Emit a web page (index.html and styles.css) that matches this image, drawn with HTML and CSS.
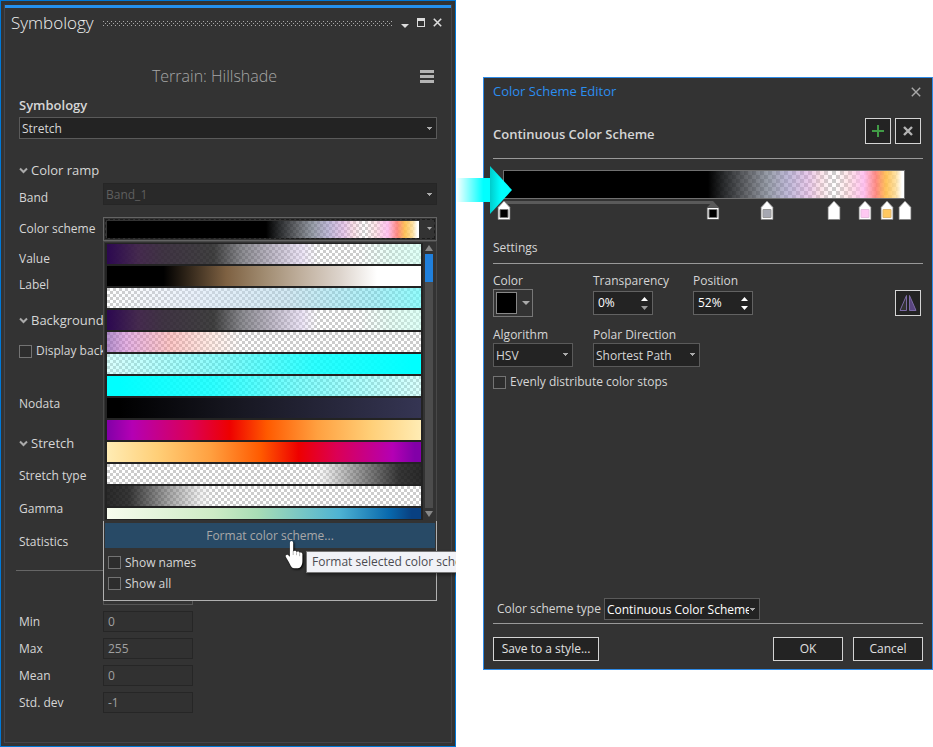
FILE: index.html
```html
<!DOCTYPE html>
<html lang="en">
<head>
<meta charset="utf-8">
<title>Symbology</title>
<link rel="stylesheet" href="styles.css">
</head>
<body>
<main class="workspace">
  <section class="pane" aria-label="Symbology pane">
    <div class="pane-inner">
      <header class="pane-header">
        <h1>Symbology</h1>
        <span class="grip"></span>
        <div class="window-buttons">
          <button type="button" aria-label="Options"><svg width="8" height="12"><path d="M0 7h8l-4 4z" fill="#ddd"/></svg></button>
          <button type="button" aria-label="Maximize"><svg width="8" height="12" shape-rendering="crispEdges"><path d="M0 1h8v9h-8zM1 4v5h6v-5z" fill="#ddd" fill-rule="evenodd"/></svg></button>
          <button type="button" aria-label="Close"><svg width="9" height="12"><path d="M.8 1.800l7.400 7.400M8.200 1.800l-7.400 7.400" stroke="#ddd" stroke-width="1.600"/></svg></button>
        </div>
      </header>
      <div class="pane-body">
        <div class="layer-row">
          <h2>Terrain: Hillshade</h2>
          <button type="button" class="menu" aria-label="Menu"><svg width="14" height="13" shape-rendering="crispEdges"><path d="M0 0h14v3H0zM0 5h14v3H0zM0 10h14v3H0z" fill="#b4b4b4"/></svg></button>
        </div>
        <label class="strong-label" for="symbology">Symbology</label>
        <select id="symbology" class="pick primary"><option>Stretch</option></select>

        <h3 class="group g-ramp"><svg width="9" height="7"><path d="M1 1.500l3.500 3.500l3.500-3.500" fill="none" stroke="#aaa" stroke-width="2"/></svg>Color ramp</h3>
        <div class="row band"><label for="band">Band</label><select id="band" class="pick" disabled><option>Band_1</option></select></div>
        <div class="row scheme">
          <span id="scheme-label">Color scheme</span>
          <div class="combo-wrap">
            <button type="button" class="combo" aria-labelledby="scheme-label" aria-expanded="true">
              <span class="ramp current"></span><svg width="5" height="4"><path d="M0 0h5l-2.500 3z" fill="#aaa"/></svg>
            </button>
            <div class="popup">
              <div class="ramp-box">
                <div class="ramp-list">
                  <span class="ramp r-violet"></span>
                  <span class="ramp r-brown"></span>
                  <span class="ramp r-mist"></span>
                  <span class="ramp r-violet"></span>
                  <span class="ramp r-rose"></span>
                  <span class="ramp r-cyan-in"></span>
                  <span class="ramp r-cyan-out"></span>
                  <span class="ramp r-night"></span>
                  <span class="ramp r-inferno"></span>
                  <span class="ramp r-inferno-back"></span>
                  <span class="ramp r-dark-end"></span>
                  <span class="ramp r-dark-start"></span>
                  <span class="ramp r-sea"></span>
                </div>
                <div class="scrollbar">
                  <svg width="8" height="6"><path d="M4 0l4 6H0z" fill="#888"/></svg>
                  <span class="track"><span class="thumb"></span></span>
                  <svg width="8" height="6"><path d="M0 0h8L4 6z" fill="#888"/></svg>
                </div>
              </div>
              <div class="popup-foot">
                <button type="button" class="format">Format color scheme...</button>
                <label class="check"><input type="checkbox">Show names</label>
                <label class="check"><input type="checkbox">Show all</label>
              </div>
              <div class="tooltip">Format selected color scheme</div>
              <svg class="hand" width="24" height="34" viewBox="0 0 24 34"><path d="M7.500 2c1.100 0 1.700.8 1.700 1.900v8.600c.8-1.400 3-1 3.300.5c.9-1 2.900-.6 3.100.9c1-.9 2.800-.2 2.800 1.400v6.700c0 4.200-1.900 7.200-4.400 7.200h-3.600c-2.400 0-3.600-2-4.700-4.500c-1-2.500-2.800-4.700-3.900-7c-.6-1.500 1-2.500 2.200-1.600l1.900 1.700V3.900c0-1.100.5-1.900 1.600-1.900z" fill="#fff"/><path d="M9.200 12v4M12.500 13.200v3M15.600 14.200v3" stroke="#999" stroke-width=".7"/></svg>
            </div>
          </div>
        </div>
        <div class="row value"><span>Value</span></div>
        <div class="row label"><span>Label</span></div>
        <h3 class="group g-background"><svg width="9" height="7"><path d="M1 1.500l3.500 3.500l3.500-3.500" fill="none" stroke="#aaa" stroke-width="2"/></svg>Background</h3>
        <label class="check display"><input type="checkbox">Display background value</label>
        <div class="row nodata"><span>Nodata</span></div>
        <h3 class="group g-stretch"><svg width="9" height="7"><path d="M1 1.500l3.500 3.500l3.500-3.500" fill="none" stroke="#aaa" stroke-width="2"/></svg>Stretch</h3>
        <div class="row type"><span>Stretch type</span></div>
        <div class="row type"><span>Gamma</span></div>
        <div class="row type"><span>Statistics</span></div>
        <hr class="stats-rule">
        <div class="row"><span></span><span class="stats-box"></span></div>
        <div class="row stat"><label for="min">Min</label><input id="min" value="0" readonly></div>
        <div class="row stat"><label for="max">Max</label><input id="max" value="255" readonly></div>
        <div class="row stat"><label for="mean">Mean</label><input id="mean" value="0" readonly></div>
        <div class="row stat"><label for="dev">Std. dev</label><input id="dev" value="-1" readonly></div>
      </div>
    </div>
  </section>

  <section class="dialog" aria-label="Color Scheme Editor">
    <svg class="arrow" width="56" height="48" viewBox="0 0 56 48">
      <defs>
        <linearGradient id="shaft"><stop offset="0" stop-color="#0ff" stop-opacity="0"/><stop offset=".8" stop-color="#0ff"/></linearGradient>
        <linearGradient id="tip"><stop offset="0" stop-color="#0cc"/><stop offset=".5" stop-color="#0ff"/></linearGradient>
      </defs>
      <path d="M0 12h34v24H0z" fill="url(#shaft)"/><path d="M34 0l22 24l-22 24z" fill="url(#tip)"/>
    </svg>
    <header class="dialog-header">
      <h2>Color Scheme Editor</h2>
      <button type="button" aria-label="Close"><svg width="10" height="10"><path d="M.8.8l8.400 8.400M9.200.8l-8.400 8.400" stroke="#a8a8a8" stroke-width="1.400"/></svg></button>
    </header>
    <div class="dialog-body">
      <div class="heading-row">
        <h3>Continuous Color Scheme</h3>
        <button type="button" class="square" aria-label="Add stop"><svg width="12" height="12" shape-rendering="crispEdges"><path d="M5 0h2v5h5v2H7v5H5V7H0V5h5z" fill="#419b46"/></svg></button>
        <button type="button" class="square" aria-label="Remove stop"><svg width="10" height="10"><path d="M1 1l8 8M9 1l-8 8" stroke="#b4b4b4" stroke-width="2.400"/></svg></button>
      </div>
      <hr>
      <div class="editor">
        <div class="ramp wide"></div>
        <div class="rail">
          <span class="rail-line"></span>
          <button type="button" class="stop" style="left:0%" aria-label="Stop 0%"><svg width="13" height="20"><path d="M.5 19.500V7.500L6.500 1l6 6.500v12z" fill="#fff" stroke="#888"/><path d="M2.500 9.500h8v8h-8z" stroke="#777"/></svg></button>
          <button type="button" class="stop" style="left:52%" aria-label="Stop 52%"><svg width="13" height="20"><path d="M.5 7.500L6.500 1l6 6.500z" fill="#5a5a5a"/><path d="M.5 7.500h12v12H.5z" fill="#fff" stroke="#555"/><path d="M2.500 9.500h8v8h-8z" stroke="#777"/></svg></button>
          <button type="button" class="stop" style="left:65.7%" aria-label="Stop 66%"><svg width="13" height="20"><path d="M.5 19.500V7.500L6.500 1l6 6.500v12z" fill="#fff" stroke="#888"/><path d="M2.500 9.500h8v8h-8z" fill="#a6a8b2" stroke="#999"/></svg></button>
          <button type="button" class="stop" style="left:82.4%" aria-label="Stop 82%"><svg width="13" height="20"><path d="M.5 19.500V7.500L6.500 1l6 6.500v12z" fill="#fff" stroke="#888"/></svg></button>
          <button type="button" class="stop" style="left:90%" aria-label="Stop 90%"><svg width="13" height="20"><path d="M.5 19.500V7.500L6.500 1l6 6.500v12z" fill="#fff" stroke="#888"/><path d="M2.500 9.500h8v8h-8z" fill="#ffc8f2" stroke="#e8c0e0"/></svg></button>
          <button type="button" class="stop" style="left:95.5%" aria-label="Stop 95%"><svg width="13" height="20"><path d="M.5 19.500V7.500L6.500 1l6 6.500v12z" fill="#fff" stroke="#888"/><path d="M2.500 9.500h8v8h-8z" fill="#ffc860" stroke="#e0b870"/></svg></button>
          <button type="button" class="stop" style="left:100%" aria-label="Stop 100%"><svg width="13" height="20"><path d="M.5 19.500V7.500L6.500 1l6 6.500v12z" fill="#fff" stroke="#888"/></svg></button>
        </div>
      </div>
      <h4>Settings</h4>
      <hr>
      <div class="fields">
        <div class="field color"><label for="color">Color</label><button type="button" id="color" class="swatch"><span></span><svg width="8" height="5"><path d="M0 0h8l-4 4z" fill="#aaa"/></svg></button></div>
        <div class="field"><label for="transparency">Transparency</label><div class="spin"><input id="transparency" value="0%"><div class="arrows"><button type="button" aria-label="Increase transparency"><svg width="7" height="4"><path d="M0 4l3.500-4L7 4z" fill="#fff"/></svg></button><button type="button" aria-label="Decrease transparency"><svg width="7" height="4"><path d="M0 0h7L3.500 4z" fill="#999"/></svg></button></div></div></div>
        <div class="field"><label for="position">Position</label><div class="spin"><input id="position" value="52%"><div class="arrows"><button type="button" aria-label="Increase position"><svg width="7" height="4"><path d="M0 4l3.500-4L7 4z" fill="#fff"/></svg></button><button type="button" aria-label="Decrease position"><svg width="7" height="4"><path d="M0 0h7L3.500 4z" fill="#fff"/></svg></button></div></div></div>
        <button type="button" class="square mirror" aria-label="Reverse"><svg width="18" height="18"><path d="M7.500 1.500v15H1z" fill="#333" stroke="#7c6ba5"/><path d="M10.500 1.500v15H17z" fill="#5a4680" stroke="#7c6ba5"/></svg></button>
      </div>
      <div class="fields second">
        <div class="field"><label for="algorithm">Algorithm</label><select id="algorithm" class="pick algo"><option>HSV</option></select></div>
        <div class="field"><label for="polar">Polar Direction</label><select id="polar" class="pick polar"><option>Shortest Path</option></select></div>
      </div>
      <label class="check even"><input type="checkbox">Evenly distribute color stops</label>
      <div class="type-row"><label for="type">Color scheme type</label><select id="type" class="pick"><option>Continuous Color Scheme</option></select></div>
      <hr>
      <footer class="actions">
        <button type="button" class="push save">Save to a style...</button>
        <button type="button" class="push">OK</button>
        <button type="button" class="push">Cancel</button>
      </footer>
    </div>
  </section>
</main>
</body>
</html>
```
FILE: styles.css
```css
* { box-sizing: border-box; }
body {
  margin: 0;
  background: #fff;
  color: #d6d6d6;
  font: 12px/16px "Open Sans", "Noto Sans", sans-serif;
}
h1, h2, h3, h4 { margin: 0; font-weight: 400; }
hr { margin: 0; border: 0; height: 1px; background: #999; }
button, input, select { font: inherit; color: inherit; margin: 0; }
button { padding: 0; border: 0; background: none; }
svg { display: block; }

.workspace {
  display: grid;
  grid-template-columns: minmax(0, 456fr) minmax(0, 450fr);
  column-gap: 27px;
  align-items: start;
  min-height: 100vh;
}

/* Symbology pane */
.pane {
  align-self: stretch;
  display: flex;
  padding: 3px;
  border: 1px solid #0078d7;
  background: #333;
  clip-path: inset(0);
}
.pane-inner {
  flex: 1;
  min-width: 0;
  border: 1px solid #45454a;
  border-top: 1px solid #333;
}
.pane-header {
  display: flex;
  align-items: center;
  height: 33px;
  padding: 0 9px 0 6px;
  border-top: 3px solid #2490ee;
}
.pane-header h1 {
  font-size: 17px;
  line-height: 24px;
  font-weight: 300;
  color: #f0f0f0;
}
.grip {
  flex: 1;
  height: 5px;
  margin: 0 9px;
  background:
    conic-gradient(from 270deg at 1px 1px, #aaa 90deg, transparent 0) 0 0 / 4px 4px,
    conic-gradient(from 270deg at 1px 1px, #aaa 90deg, transparent 0) 2px 2px / 4px 4px;
}
.window-buttons { display: flex; gap: 8px; }
.pane-body {
  display: flex;
  flex-direction: column;
  padding: 23px 14px 28px;
}
.layer-row {
  display: flex;
  align-items: center;
  height: 30px;
  padding-right: 3px;
}
.layer-row h2 {
  flex: 1;
  padding-right: 10px;
  text-align: center;
  font-size: 16px;
  line-height: 24px;
  font-weight: 300;
  color: #a6a6a6;
}
.strong-label, .group { font-size: 13px; line-height: 20px; }
.strong-label { margin-top: 4px; font-weight: 600; }
.group { display: flex; align-items: center; gap: 3px; font-weight: 500; }
.g-ramp { margin-top: 21px; }
.g-background { margin-top: 15px; }
.g-stretch { margin-top: 19px; }

.pick {
  appearance: none;
  height: 22px;
  padding: 1px 10px 0 2px;
  border: 1px solid #5a5a5a;
  border-radius: 0;
  background-color: #232323;
  background-image: linear-gradient(#aaa, #aaa), linear-gradient(#aaa, #aaa), linear-gradient(#aaa, #aaa);
  background-repeat: no-repeat;
  background-size: 5px 1px, 3px 1px, 1px 1px;
  background-position: right 4px top 9px, right 5px top 10px, right 6px top 11px;
}
.primary { margin-top: 2px; }
.row { display: grid; grid-template-columns: 84px minmax(0, 1fr); align-items: center; }
.band { margin-top: 3px; }
.band label { padding-top: 8px; line-height: 14px; }
.band .pick { opacity: 1; color: #5f5f5f; background-color: #292929; border-color: #262626; }
.scheme { margin-top: 12px; }
.value, .label, .nodata, .type { min-height: 20px; }
.value { margin-top: 8px; }
.label { margin-top: 6px; }
.nodata { margin-top: 33px; }
.type { margin-top: 13px; }
.stats-rule { margin: 18px -3px 12px; background: #666; }
.stats-box { width: 90px; height: 22px; border: 1px solid #555; }
.stat { margin-top: 6px; }
.stat input {
  width: 90px;
  height: 21px;
  padding: 0 4px;
  border: 1px solid #262626;
  background: #313131;
  color: #a0a0a0;
}

.check { display: flex; align-items: center; gap: 4px; line-height: 20px; white-space: nowrap; }
.check input {
  appearance: none;
  flex: none;
  width: 13px;
  height: 13px;
  border: 1px solid #737373;
  background: #2d2d2d;
}
.display { margin-top: 11px; }

/* Ramps */
.ramp {
  --paint: linear-gradient(#000, #000);
  display: block;
  flex: none;
  height: 20px;
  background: var(--paint), conic-gradient(#fff 25%, #ccc 0 50%, #fff 0 75%, #ccc 0) 0 0 / 6px 6px;
}
.current, .wide {
  --paint: linear-gradient(90deg, #000 51%, rgba(20,22,24,.9) 55%, rgba(55,58,64,.75) 61%, rgba(100,108,125,.65) 66%, rgba(150,140,190,.6) 71%, rgba(210,150,215,.5) 76%, rgba(245,180,200,.4) 79%, rgba(255,255,255,0) 82.500%, rgba(255,190,200,.4) 86%, rgba(255,185,238,.85) 90%, rgba(255,125,115,.88) 93%, rgba(255,190,75,.9) 95.500%, rgba(255,220,145,.8) 98%, #fff 99.500%);
}
.r-violet { --paint: linear-gradient(90deg, #2c0850, rgba(58,30,68,.94) 10%, rgba(48,36,52,.92) 18%, rgba(34,34,34,.86) 34%, rgba(85,85,92,.68) 43%, rgba(140,130,155,.55) 53%, rgba(215,200,235,.5) 62%, rgba(255,255,255,0) 67%, rgba(255,255,255,0) 80%, rgba(180,250,225,.3) 90%, rgba(200,255,240,.6)); }
.r-brown { --paint: linear-gradient(90deg, #000 18%, #7e6142 38%, #a08b70 50%, #c0b09e 62%, #dcd3cb 74%, #fff 86%); }
.r-mist { --paint: linear-gradient(90deg, rgba(255,255,255,0), rgba(210,225,245,.5) 28%, rgba(165,210,230,.5) 58%, rgba(90,225,240,.5) 86%, rgba(100,250,250,.7)); }
.r-rose { --paint: linear-gradient(90deg, rgba(145,95,180,.7), rgba(205,115,205,.55) 6%, rgba(250,140,140,.48) 20%, rgba(255,205,190,.4) 33%, rgba(255,255,255,0) 43%); }
.r-cyan-in { --paint: linear-gradient(90deg, rgba(150,255,250,.35), rgba(30,250,250,.55) 38%, rgba(0,255,255,.82) 66%, #0ff 97%); }
.r-cyan-out { --paint: linear-gradient(90deg, #0ff 4%, rgba(0,255,255,.82) 34%, rgba(30,250,250,.55) 62%, rgba(150,255,250,.35)); }
.r-night { --paint: linear-gradient(90deg, #000 4%, #15151e 38%, #353553); }
.r-inferno { --paint: linear-gradient(90deg, #8200a8, #b400b4 8%, #dc0054 27%, #ee0000 39%, #ff5a00 51%, #ffa040 67%, #ffcf78 84%, #ffecb4); }
.r-inferno-back { --paint: linear-gradient(270deg, #8200a8 2%, #b400b4 9%, #dc0054 27%, #ee0000 39%, #ff5a00 51%, #ffa040 67%, #ffcf78 84%, #ffecb4); }
.r-dark-end { --paint: linear-gradient(90deg, rgba(255,255,255,0) 66%, rgba(220,220,220,.4) 69%, rgba(110,110,110,.6) 78%, rgba(25,25,25,.87) 93%, rgba(20,20,20,.9)); }
.r-dark-start { --paint: linear-gradient(270deg, rgba(255,255,255,0) 66%, rgba(220,220,220,.4) 70%, rgba(110,110,110,.6) 80%, rgba(25,25,25,.87) 93%, rgba(20,20,20,.9)); }
.r-sea { --paint: linear-gradient(90deg, #f7fcee, #cdebc5 34%, #a8ddb5 48%, #4eb3d3 74%, #0868ac 90%, #084081 97%); }

.combo-wrap { position: relative; }
.combo {
  display: flex;
  align-items: center;
  width: 100%;
  height: 24px;
  padding: 0 4px 0 2px;
  border: 1px solid #646464;
  outline: 1px dashed #1c1c1c;
  outline-offset: -3px;
}
.combo .ramp { flex: 1; height: 17px; margin: 0 8px 0 1px; }

.popup { position: absolute; z-index: 2; top: 24px; left: 0; right: 0; background: #333; }
.ramp-box { display: flex; padding: 1px 3px 1px 1px; border: 1px solid #484848; border-bottom: 0; }
.ramp-list {
  flex: 1;
  display: flex;
  flex-direction: column;
  gap: 2px;
  height: 277px;
  overflow: hidden;
  padding: 1px 2px;
  background: #232323;
  border-bottom: 1px solid #232323;
}
.scrollbar { display: flex; flex-direction: column; gap: 3px; width: 8px; margin: 2px 0 3px 2px; }
.track { flex: 1; background: #4c4c4c; }
.thumb { display: block; height: 28px; background: #2080dc; }
.popup-foot {
  display: flex;
  flex-direction: column;
  padding: 2px 1px 6px;
  border: 1px solid #b0b0b0;
  border-top: 0;
}
.format { height: 25px; margin-bottom: 4px; background: #284a66; color: #a8a8a8; }
.popup-foot .check { padding-left: 3px; height: 21px; }
.tooltip {
  position: absolute;
  left: 203px;
  top: 310px;
  padding: 1px 5px 2px;
  border: 1px solid #767676;
  background: #f1f2f7;
  color: #4b4b50;
  line-height: 17px;
  white-space: nowrap;
  box-shadow: 1px 2px 3px #1119;
}
.hand { position: absolute; left: 181px; top: 298px; filter: drop-shadow(1px 1px 1px #000); }

/* Editor dialog */
.dialog {
  position: relative;
  margin-top: 77px;
  border: 1px solid #2e8ae6;
  background: #333;
}
.arrow { position: absolute; left: -28px; top: 88px; z-index: 1; }
.dialog-header {
  display: flex;
  align-items: center;
  justify-content: space-between;
  height: 28px;
  padding: 0 11px 0 9px;
}
.dialog-header h2 { font-size: 13px; line-height: 18px; padding-bottom: 2px; color: #2b8ef0; }
.dialog-body { display: flex; flex-direction: column; padding: 12px 9px 8px; }
.heading-row { display: flex; align-items: end; gap: 4px; padding-right: 2px; margin-bottom: 14px; }
.heading-row h3 { flex: 1; font-size: 13px; line-height: 20px; font-weight: 600; }
.square {
  display: grid;
  place-items: center;
  width: 26px;
  height: 26px;
  border: 1px solid #d4d4d4;
  background: #232323;
}
.editor { padding: 11px 18px 14px 10px; }
.wide {
  height: 29px;
  border: 1px solid #707070;
  background-size: auto, 8px 8px;
}
.rail { position: relative; height: 25px; margin-left: 1px; }
.rail-line { display: block; width: 52%; height: 5px; border-bottom: 3px solid #5a5a5a; }
.stop { position: absolute; top: 1px; transform: translateX(-50%); }
.dialog h4 { line-height: 20px; margin-bottom: 5px; }
.fields { display: flex; gap: 40px; margin-top: 9px; }
.field { display: flex; flex-direction: column; width: 60px; white-space: nowrap; }
.spin {
  display: flex;
  align-items: center;
  width: 60px;
  height: 24px;
  margin-top: 2px;
  padding-right: 4px;
  border: 1px solid #626262;
  background: #232323;
  color: #fff;
}
.spin input { flex: 1; width: 0; padding: 0 0 0 4px; border: 0; background: none; }
.arrows { display: grid; gap: 5px; }
.swatch {
  display: flex;
  align-items: center;
  gap: 5px;
  width: 40px;
  height: 28px;
  padding: 0 2px;
  border: 1px solid #777;
}
.swatch span { width: 22px; height: 22px; border: 1px solid #888; background: #000; }
.mirror { margin: 17px 2px 0 auto; }
.second { margin-top: 10px; }
.second .pick { height: 24px; }
.algo { width: 80px; }
.polar { width: 107px; }
.even { margin-top: 5px; }
.type-row { display: flex; align-items: center; gap: 3px; margin: 206px 0 3px 4px; }
.type-row .pick { width: 156px; color: #fff; }
.actions { display: flex; gap: 10px; margin-top: 13px; }
.push { width: 70px; height: 24px; border: 1px solid #d4d4d4; background: #232323; color: #e0e0e0; }
.save { width: 106px; margin-right: auto; }
```
